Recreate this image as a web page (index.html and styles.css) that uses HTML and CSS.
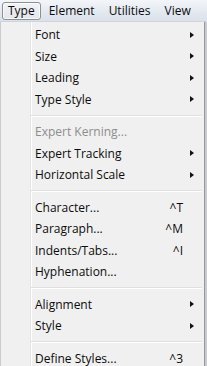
FILE: index.html
```html
<!DOCTYPE html>
<html>
<head>
<meta charset="utf-8">
<link rel="stylesheet" href="styles.css">
</head>
<body>
<div class="screen">
  <div class="menubar">
    <div class="mb-item active">Type</div>
    <div class="mb-item">Element</div>
    <div class="mb-item">Utilities</div>
    <div class="mb-item">View</div>
  </div>
  <div class="menu">
    <div class="item"><span class="label">Font</span><span class="arrow"></span></div>
    <div class="item"><span class="label">Size</span><span class="arrow"></span></div>
    <div class="item"><span class="label">Leading</span><span class="arrow"></span></div>
    <div class="item"><span class="label">Type Style</span><span class="arrow"></span></div>
    <div class="sep"></div>
    <div class="item disabled"><span class="label">Expert Kerning...</span><span class="noarrow"></span></div>
    <div class="item"><span class="label">Expert Tracking</span><span class="arrow"></span></div>
    <div class="item"><span class="label">Horizontal Scale</span><span class="arrow"></span></div>
    <div class="sep"></div>
    <div class="item"><span class="label">Character...</span><span class="key">^T</span><span class="noarrow"></span></div>
    <div class="item"><span class="label">Paragraph...</span><span class="key">^M</span><span class="noarrow"></span></div>
    <div class="item"><span class="label">Indents/Tabs...</span><span class="key">^I</span><span class="noarrow"></span></div>
    <div class="item"><span class="label">Hyphenation...</span><span class="noarrow"></span></div>
    <div class="sep"></div>
    <div class="item"><span class="label">Alignment</span><span class="arrow"></span></div>
    <div class="item"><span class="label">Style</span><span class="arrow"></span></div>
    <div class="sep"></div>
    <div class="item"><span class="label">Define Styles...</span><span class="key">^3</span><span class="noarrow"></span></div>
  </div>
</div>
</body>
</html>
```
FILE: styles.css
```css
html, body {
  margin: 0;
  padding: 0;
  background: #b9bcc2;
}
.screen {
  width: 207px;
  height: 366px;
  overflow: hidden;
  font-family: "Open Sans", "Noto Sans", sans-serif;
  font-size: 12px;
  color: #0c0c0c;
  background: #c8cacf;
}
.menubar {
  height: 22px;
  display: flex;
  align-items: center;
  padding-left: 2px;
  background: linear-gradient(#f3f5f9, #e3e8f0 60%, #dbe1ea);
  border-bottom: 1px solid #cfd4dc;
  box-sizing: border-box;
}
.mb-item {
  height: 18px;
  line-height: 16px;
  padding: 0 5px;
  margin-right: 2px;
  border: 1px solid transparent;
  border-radius: 3px;
  box-sizing: border-box;
}
.mb-item.active {
  border-color: #8e8f91;
  background: linear-gradient(#f2f3f5, #e4e6ea);
  box-shadow: inset 0 0 0 1px rgba(255,255,255,0.7);
}
.menu {
  width: 205px;
  box-sizing: border-box;
  border-right: 1px solid #979797;
  border-bottom: 1px solid #979797;
  border-left: 1px solid #c9cbcf;
  padding: 2px 2px 1px 2px;
  background-color: #f0f0f0;
  background-image: linear-gradient(to right, transparent 29px, #e2e3e3 29px, #e2e3e3 30px, #ffffff 30px, #ffffff 31px, transparent 31px);
}
.item {
  height: 21.5px;
  display: flex;
  align-items: center;
  padding-left: 32px;
  padding-right: 8px;
}
.label {
  flex: 1;
  white-space: nowrap;
}
.disabled {
  color: #8d8d8d;
}
.key {
  margin-right: 7px;
}
.arrow, .noarrow {
  width: 4px;
  height: 7px;
}
.arrow {
  border-left: 4px solid #111;
  border-top: 3.5px solid transparent;
  border-bottom: 3.5px solid transparent;
  width: 0;
  height: 0;
}
.sep {
  height: 11px;
  margin-left: 28px;
  display: flex;
  flex-direction: column;
  justify-content: center;
}
.sep::before {
  content: "";
  display: block;
  height: 1px;
  background: #e0e0e0;
  border-bottom: 1px solid #ffffff;
}
```
